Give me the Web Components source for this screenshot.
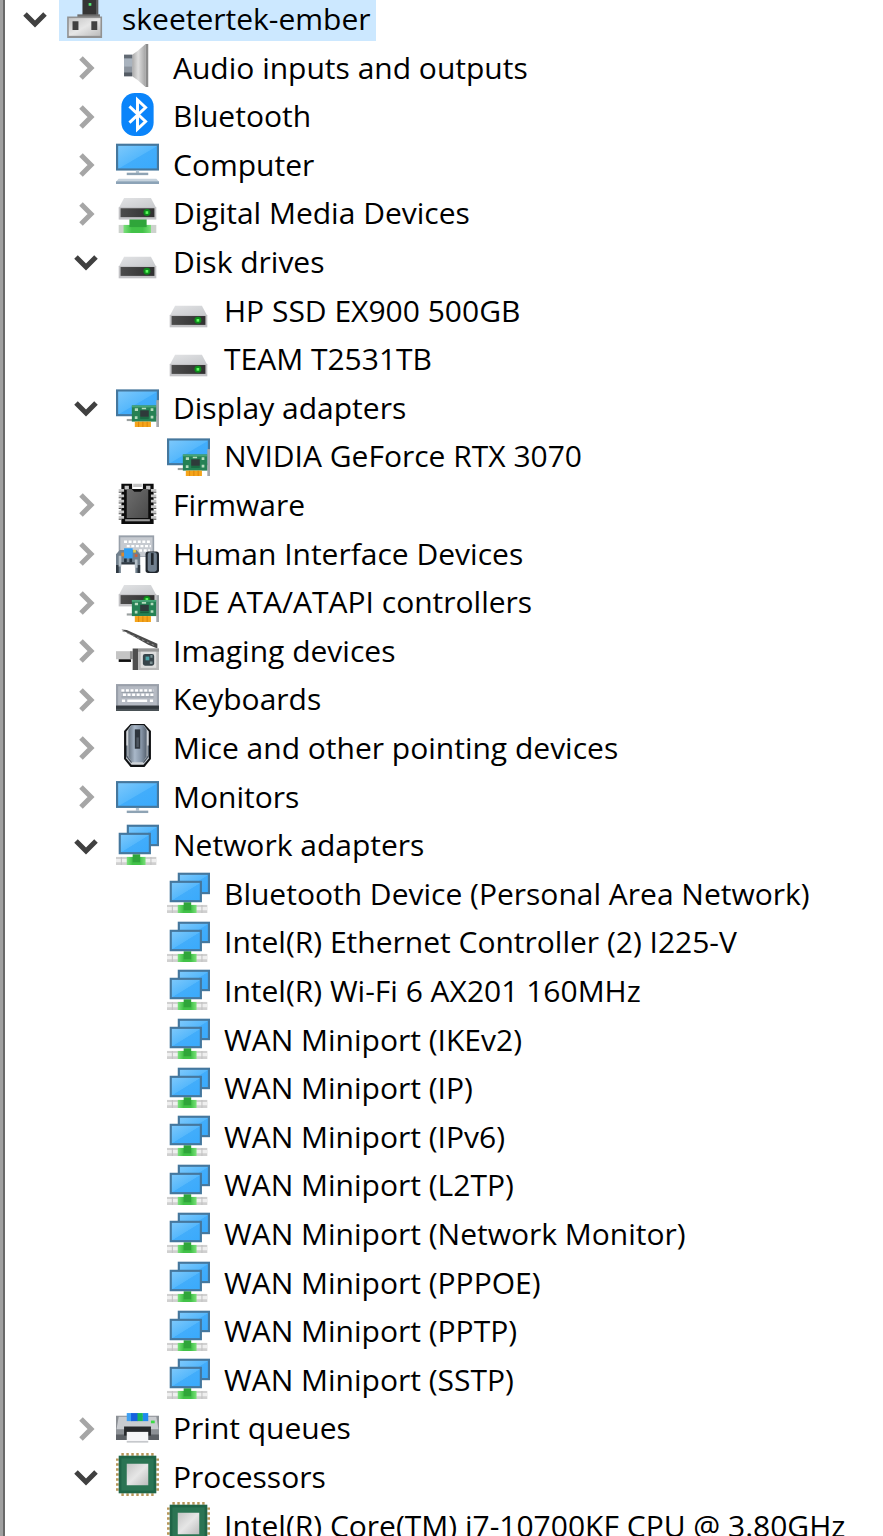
<!DOCTYPE html>
<html lang="en">
<head>
<meta charset="utf-8">
<meta name="viewport" content="width=device-width, initial-scale=1">
<title>Device Manager</title>
<style>
    body {
        margin: 0;
        background: #fff;
        color: #000;
        font-family: "Open Sans", "Noto Sans", sans-serif;
        font-size: 30px;
    }
</style>
</head>
<body>
<device-tree>
    <tree-row level="0" icon="root" state="open" selected>skeetertek-ember</tree-row>
    <tree-row level="1" icon="audio" state="closed">Audio inputs and outputs</tree-row>
    <tree-row level="1" icon="bluetooth" state="closed">Bluetooth</tree-row>
    <tree-row level="1" icon="computer" state="closed">Computer</tree-row>
    <tree-row level="1" icon="media" state="closed">Digital Media Devices</tree-row>
    <tree-row level="1" icon="disk" state="open">Disk drives</tree-row>
    <tree-row level="2" icon="disk">HP SSD EX900 500GB</tree-row>
    <tree-row level="2" icon="disk">TEAM T2531TB</tree-row>
    <tree-row level="1" icon="display" state="open">Display adapters</tree-row>
    <tree-row level="2" icon="display">NVIDIA GeForce RTX 3070</tree-row>
    <tree-row level="1" icon="firmware" state="closed">Firmware</tree-row>
    <tree-row level="1" icon="hid" state="closed">Human Interface Devices</tree-row>
    <tree-row level="1" icon="ide" state="closed">IDE ATA/ATAPI controllers</tree-row>
    <tree-row level="1" icon="imaging" state="closed">Imaging devices</tree-row>
    <tree-row level="1" icon="keyboard" state="closed">Keyboards</tree-row>
    <tree-row level="1" icon="mouse" state="closed">Mice and other pointing devices</tree-row>
    <tree-row level="1" icon="monitor" state="closed">Monitors</tree-row>
    <tree-row level="1" icon="network" state="open">Network adapters</tree-row>
    <tree-row level="2" icon="network">Bluetooth Device (Personal Area Network)</tree-row>
    <tree-row level="2" icon="network">Intel(R) Ethernet Controller (2) I225-V</tree-row>
    <tree-row level="2" icon="network">Intel(R) Wi-Fi 6 AX201 160MHz</tree-row>
    <tree-row level="2" icon="network">WAN Miniport (IKEv2)</tree-row>
    <tree-row level="2" icon="network">WAN Miniport (IP)</tree-row>
    <tree-row level="2" icon="network">WAN Miniport (IPv6)</tree-row>
    <tree-row level="2" icon="network">WAN Miniport (L2TP)</tree-row>
    <tree-row level="2" icon="network">WAN Miniport (Network Monitor)</tree-row>
    <tree-row level="2" icon="network">WAN Miniport (PPPOE)</tree-row>
    <tree-row level="2" icon="network">WAN Miniport (PPTP)</tree-row>
    <tree-row level="2" icon="network">WAN Miniport (SSTP)</tree-row>
    <tree-row level="1" icon="printer" state="closed">Print queues</tree-row>
    <tree-row level="1" icon="cpu" state="open">Processors</tree-row>
    <tree-row level="2" icon="cpu">Intel(R) Core(TM) i7-10700KF CPU @ 3.80GHz</tree-row>
</device-tree>

<script>
// gradients shared by the icons, every shadow root needs its own copy
const DEFS = `
    <defs>
        <linearGradient id="screen" x1="0" y1="0" x2="1" y2="1">
            <stop offset="0" stop-color="#7cc8fb"/><stop offset=".5" stop-color="#56b8fc"/>
            <stop offset=".52" stop-color="#42adfb"/><stop offset="1" stop-color="#3aaafc"/>
        </linearGradient>
        <linearGradient id="lid" x1="0" y1="0" x2="1" y2="1">
            <stop offset="0" stop-color="#e2e3e5"/><stop offset="1" stop-color="#c6c8cb"/>
        </linearGradient>
        <linearGradient id="front" x1="0" y1="0" x2="1" y2="0">
            <stop offset="0" stop-color="#4c4c4c"/><stop offset="1" stop-color="#303030"/>
        </linearGradient>
        <linearGradient id="metal" x1="0" y1="0" x2="1" y2="1">
            <stop offset="0" stop-color="#c4c4c4"/><stop offset=".5" stop-color="#e6e6e6"/>
            <stop offset="1" stop-color="#bcbcbc"/>
        </linearGradient>
        <linearGradient id="cone" x1="0" y1="0" x2="1" y2="0">
            <stop offset="0" stop-color="#a9a9a9"/><stop offset=".45" stop-color="#dedede"/>
            <stop offset="1" stop-color="#a4a4a4"/>
        </linearGradient>
        <linearGradient id="steel" x1="0" y1="0" x2="1" y2="0">
            <stop offset="0" stop-color="#66727f"/><stop offset=".35" stop-color="#a9b8c9"/>
            <stop offset=".7" stop-color="#8796a8"/><stop offset="1" stop-color="#566270"/>
        </linearGradient>
        <linearGradient id="chip" x1="0" y1="0" x2="1" y2="1">
            <stop offset="0" stop-color="#6e6e6e"/><stop offset="1" stop-color="#4a4a4a"/>
        </linearGradient>
        <linearGradient id="green" x1="0" y1="0" x2="1" y2="0">
            <stop offset="0" stop-color="#7be07b"/><stop offset=".3" stop-color="#42c248"/>
            <stop offset=".7" stop-color="#42c248"/><stop offset="1" stop-color="#7be07b"/>
        </linearGradient>
    </defs>`;

const drive = y => `
    <path d="M3 ${y}h10L15 ${y + 3.8}H1z" fill="url(#lid)"/>
    <rect x="1" y="${y + 3.4}" width="14" height="4.6" fill="#c3c3c6"/>
    <rect x="1.7" y="${y + 3.8}" width="12.6" height="3.3" fill="url(#front)"/>
    <circle cx="11.5" cy="${y + 5.4}" r="1.3" fill="#0e8a1c"/>
    <rect x="11" y="${y + 4.9}" width="1" height="1" fill="#5dfc5d"/>`;

const screen = (x, y, w, h) => `
    <rect x="${x}" y="${y}" width="${w}" height="${h}" fill="#45779d"/>
    <rect x="${x + .8}" y="${y + .8}" width="${w - 1.6}" height="${h - 1.6}" fill="url(#screen)"/>`;

const card = y => `
    <rect x="4" y="${y + 5}" width="3" height=".8" fill="#9aa0a0"/>
    <rect x="5.9" y="${y}" width="9.2" height="6" fill="#258154"/>
    <path d="M5.9 ${y}h9.2v.7H5.9z" fill="#48a577"/>
    <path d="M7 ${y + 1}h1.2v1H7zM12.9 ${y + 1}h1v1h-1zM7 ${y + 4}h1v1H7zM12.9 ${y + 3.8}h1v1h-1zM9.6 ${y + .8}h1.6v.6H9.6z" fill="#b5dcbd"/>
    <rect x="9" y="${y + 1.8}" width="3.2" height="2.4" fill="#2e3a3a"/>
    <path d="M9 ${y + 4.4}h3.2v.5H9z" fill="#155f3b"/>
    <rect x="7" y="${y + 6}" width="6" height="${10 - y}" fill="#f5a51b"/>
    <path d="M8.4 ${y + 6}v${10 - y}M10 ${y + 6}v${10 - y}M11.6 ${y + 6}v${10 - y}" stroke="#d87f08" stroke-width=".3"/>
    <rect x="15" y="6" width="1" height="10" fill="#a4a7ab"/>`;

const plug = `
    <rect x="0" y="13" width="15" height="3" fill="#d0d0d0"/>
    <path d="M0 14.4h15" stroke="#efefef" stroke-width="1.2"/>
    <path d="M2 13v3M13 13v3" stroke="#c2c2c2" stroke-width=".4"/>
    <rect x="4" y="13" width="7" height="3" fill="url(#green)"/>
    <rect x="6.2" y="12" width="2.8" height="3" fill="#2fa53a"/>`;

const pins = () => {
    let d = "";
    for (let i = 0; i < 7; i++) {
        const p = 2 + i * 1.85;
        d += `M${p} 0h.9v1h-.9zM${p} 15h.9v1h-.9zM0 ${p}h1v.9H0zM15 ${p}h1v.9h-1z`;
    }
    return d;
};

const ICONS = {
    root: `
        <rect x="6.5" y="0" width="5.3" height="8" fill="#353535"/>
        <rect x="11.6" y="0" width=".8" height="7.4" fill="#595959"/>
        <rect x="8.8" y="3" width="1" height="1" fill="#53ea74"/>
        <rect x="4.6" y="7.2" width="8.4" height="1" fill="#6e6e6e"/>
        <rect x=".8" y="8" width="13" height="8" fill="#919191"/>
        <rect x="1.4" y="8.6" width="11.8" height="6.6" fill="url(#metal)"/>
        <path d="M2.8 9.8h2.2v3.2H2.8zM9.8 9.8H12v3.2H9.8z" fill="#414141"/>`,
    audio: `
        <path d="M6 4L8 2.6 11 0v16L8 13.4 6 12z" fill="url(#cone)"/>
        <rect x="11" y="0" width="1" height="16" fill="#8b8b8b"/>
        <rect x="3" y="4" width="3" height="8" fill="#8b939d"/>
        <path d="M3 4h3v1.4H3z" fill="#626a74"/>
        <path d="M3 5.4h3v3H3z" fill="#a9b3be"/>
        <path d="M3 10.6h3V12H3z" fill="#545b64"/>`,
    bluetooth: `
        <rect x="2" y="0" width="12" height="16" rx="5" fill="#0a84fa"/>
        <path d="M5 5l6 5.6-3 2.8V2.6l3 2.8L5 11" fill="none" stroke="#fff" stroke-width="1.1"/>`,
    computer: `
        ${screen(0, 1, 16, 10)}
        <path d="M7.4 11h1.2v1H7.4z" fill="#b4c4d0"/>
        <rect x="4" y="11.8" width="8" height=".9" fill="#8ea3b4"/>
        <path d="M1 14h14l1 1.2H0z" fill="#c5d2dd"/>
        <rect x="0" y="15" width="16" height="1" fill="#8ca3b7"/>`,
    media: `
        <rect x="1" y="13" width="14" height="3" fill="#cdd2cd"/>
        <rect x="2.8" y="13" width="10.2" height="3" fill="url(#green)"/>
        <rect x="5" y="10.4" width="6.4" height="3.4" fill="#2fa53a"/>
        ${drive(3)}`,
    disk: drive(7),
    display: screen(0, 2, 16, 10) + card(8),
    firmware: `
        <path d="M2 1h4v2h4V1h4v15H2z" fill="#0c0c0c"/>
        <path d="M3.2 1.8h1.6v1.4H3.2zM11.2 1.8h1.6v1.4h-1.6zM6.4 1h3.2v1.2H6.4z" fill="#c3c3c3"/>
        <path d="M4 3h1.8l1 1h2.4l1-1H12v10.8H4z" fill="url(#chip)"/>
        <path d="M3.4 14.2h9.2v.8H3.4z" fill="#989898"/>
        <path d="M1 3h2v1H1zM1 5h2v1H1zM1 7h2v1H1zM1 9h2v1H1zM1 11h2v1H1zM1 13h2v1H1z" fill="#c6c6c6"/>
        <path d="M13 3h2v1h-2zM13 5h2v1h-2zM13 7h2v1h-2zM13 9h2v1h-2zM13 11h2v1h-2zM13 13h2v1h-2z" fill="#c6c6c6"/>
        <path d="M1 4h1v.4H1zM1 6h1v.4H1zM1 8h1v.4H1zM1 10h1v.4H1zM1 12h1v.4H1zM1 14h1v.4H1zM14 4h1v.4h-1zM14 6h1v.4h-1zM14 8h1v.4h-1zM14 10h1v.4h-1zM14 12h1v.4h-1zM14 14h1v.4h-1z" fill="#555"/>`,
    hid: `
        <rect x="1" y="2" width="13.2" height="8" fill="#98a0aa"/>
        <rect x="1.6" y="2.7" width="12" height="7" fill="#c6cad0"/>
        <path d="M3 4.4h10M4 6h9M8.6 7.6h4" stroke="#fff" stroke-width=".9" stroke-dasharray="1.1 .6"/>
        <path d="M0 9L1.4 7.4H7.6L9 9V16H7.2V12.4H1.8V16H0z" fill="#71808d"/>
        <path d="M0 13h1v3H0zM8 13h1v3H8zM1.8 12h5.4v.8H1.8z" fill="#2f3942"/>
        <path d="M1 9.6h1v4H1zM7 11h1v3H7z" fill="#b4bfc8"/>
        <rect x="3" y="6.8" width="3.2" height="3.8" fill="#2f9df0"/>
        <path d="M2 8.4h1v1.4H2z" fill="#d98a2e"/>
        <rect x="6.4" y="7.4" width="1" height="1" fill="#e6cf43"/>
        <rect x="7" y="9" width="1" height="1" fill="#cf5f3a"/>
        <path d="M3 10.6h1V12H3zM5 10.6h1V12H5z" fill="#22313d"/>
        <rect x="11" y="8" width="5" height="8" rx="1" fill="#1f252c"/>
        <rect x="11.8" y="8.3" width="3.4" height="7.2" rx=".9" fill="#71808f"/>
        <rect x="13" y="8.6" width="1" height="4.4" fill="#20262c"/>`,
    ide: drive(2.2) + card(7.8),
    imaging: `
        <path d="M2 .9L4 1.1 15.4 6.2V8L12 6.6z" fill="#4a4a4a"/>
        <path d="M2.4 1.4L15 7.2" stroke="#8e8e8e" stroke-width=".4" stroke-dasharray="1 1"/>
        <rect x="0" y="9" width="5.4" height="3" fill="#c4c4c4"/>
        <rect x="1" y="12" width="4.6" height="1" fill="#111"/>
        <rect x="5.2" y="9" width="1" height="3" fill="#8b8b8b"/>
        <rect x="6.2" y="8" width="2" height="8" fill="#4e4e4e"/>
        <rect x="8.2" y="8" width="7.8" height="8" fill="#b9b9b9"/>
        <path d="M8.2 8h7.8v1.2H8.2z" fill="#979797"/>
        <rect x="9.2" y="9.2" width="5.8" height="6" fill="#dedede"/>
        <rect x="10" y="10" width="4.2" height="4.4" rx=".8" fill="#37444a"/>
        <path d="M11 11h1.4v1.4H11z" fill="#4ba2a8"/>
        <path d="M12.6 12.8h1v1h-1zM12.8 10.4h.8v1h-.8z" fill="#7b8f92"/>`,
    keyboard: `
        <rect x="0" y="3" width="16" height="8.2" fill="#9aa0aa"/>
        <rect x=".8" y="3.8" width="14.4" height="7.2" fill="#b5bac3"/>
        <path d="M2 5.4h12M2.6 7h11.4" stroke="#fff" stroke-width=".9" stroke-dasharray="1.1 .6"/>
        <path d="M2.2 9.2h1.2M4.2 9.2h7.4M12.6 9.2h1.2" stroke="#fff" stroke-width=".9"/>
        <path d="M2 6.1h12M2 7.8h12" stroke="#8f96a1" stroke-width=".3"/>
        <rect x="0" y="11" width="16" height="2" fill="#32383d"/>
        <rect x="0" y="12.2" width="16" height=".8" fill="#4b5257"/>`,
    mouse: `
        <path d="M5.4 0h5.2L13 2.6V13l-2.4 3H5.4L3 13V2.6z" fill="#101214"/>
        <path d="M5.6.6h4.8l1.8 2.2v10l-2 2.4H5.8l-2-2.4v-10z" fill="#cfd4d9"/>
        <path d="M5.8.5h4.4l1.2 1.6v10L10 14.2H6l-1.4-2.1v-10z" fill="url(#steel)"/>
        <path d="M4 8v4l1.8 2.4M12 8v4l-1.8 2.4" fill="none" stroke="#4c5764" stroke-width=".5"/>
        <rect x="7" y="2" width="2" height="7.2" fill="#2e353d"/>
        <rect x="7.6" y="5" width=".9" height="3.6" fill="#4e5761"/>`,
    monitor: `
        ${screen(0, 3, 16, 10)}
        <path d="M7.4 13h1.2v1H7.4z" fill="#b4c4d0"/>
        <rect x="4" y="14" width="8" height=".9" fill="#8ea3b4"/>`,
    network: screen(4, 1, 12, 8) + plug + screen(1, 4, 12, 8),
    printer: `
        <rect x="0" y="4" width="16" height="9" fill="#8d9196"/>
        <path d="M1 4.4h14L15.8 9H.2z" fill="#c9ccd0"/>
        <path d="M0 11h16v2H0z" fill="#5c6065"/>
        <rect x="4" y="3" width="2" height="3" fill="#3fa0f2"/>
        <rect x="5.6" y="3" width="2.6" height="3" fill="#1662de"/>
        <rect x="8" y="3" width="2" height="3" fill="#19b85c"/>
        <rect x="10" y="3" width="2" height="3" fill="#2089f0"/>
        <rect x="13" y="5.8" width="1.4" height="1" fill="#3adb43"/>
        <path d="M3 8h10v3.4H3z" fill="#26282b"/>
        <rect x="4" y="10" width="8" height="4" fill="#f6f6f8"/>
        <path d="M4 13.7h8" stroke="#c6c8cc" stroke-width=".6"/>`,
    cpu: `
        <path d="${pins()}" fill="#b8975a"/>
        <rect x="1" y="1" width="14" height="14" fill="#1f6547"/>
        <rect x="2" y="2" width="12" height="12" fill="#2b7453"/>
        <rect x="4" y="4" width="8" height="8" fill="url(#metal)"/>`
};

class DeviceIcon extends HTMLElement {
    constructor() {
        super();
        this.root = this.attachShadow({ mode: "open" });
    }

    connectedCallback() {
        this.root.innerHTML = `
            <style>
                :host { display: block; flex: none; }
                svg { display: block; width: 43px; height: 43px; }
            </style>
            <svg viewBox="0 0 16 16" aria-hidden="true">${DEFS}${ICONS[this.getAttribute("name")] || ""}</svg>
        `;
    }
}

class TreeRow extends HTMLElement {
    constructor() {
        super();
        this.root = this.attachShadow({ mode: "open" });
    }

    get level() {
        return Number(this.getAttribute("level"));
    }

    connectedCallback() {
        this.setAttribute("role", "treeitem");
        this.setAttribute("aria-level", this.level + 1);
        this.root.innerHTML = `
            <style>
                :host {
                    display: flex;
                    align-items: stretch;
                    box-sizing: border-box;
                    height: 49px;
                    padding-left: 6px;
                    white-space: nowrap;
                }
                :host([level="1"]) { padding-left: 57px; }
                :host([level="2"]) { padding-left: 108px; }
                :host([hidden]) { display: none; }

                .toggle {
                    flex: none;
                    display: flex;
                    align-items: center;
                    justify-content: center;
                    width: 48px;
                    margin: 0;
                    padding: 5px 0 0;
                    border: none;
                    background: none;
                    color: #a6a6a6;
                    cursor: pointer;
                }
                .toggle svg { display: block; width: 24px; height: 24px; }
                .toggle path { fill: none; stroke: currentColor; stroke-width: 5; }
                :host([state="open"]) .toggle { color: #404040; }
                :host([state="open"]) .toggle svg { transform: rotate(90deg); }
                :host(:not([state])) .toggle { visibility: hidden; }

                .node {
                    display: flex;
                    align-items: center;
                    gap: 14px;
                    padding: 0 5px 0 6px;
                }
                :host([selected]) .node { background: #cce8ff; }
                .label { padding-top: 4px; line-height: 36px; }
            </style>
            <button class="toggle" type="button" aria-label="Toggle">
                <svg viewBox="0 0 24 24"><path d="M7 2L17 12 7 22"/></svg>
            </button>
            <div class="node">
                <device-icon name="${this.getAttribute("icon")}"></device-icon>
                <span class="label"><slot></slot></span>
            </div>
        `;
        this.root.querySelector(".toggle").addEventListener("click", e => this.onToggle(e), false);
    }

    onToggle() {
        this.setAttribute("state", this.getAttribute("state") == "open" ? "closed" : "open");
        this.dispatchEvent(new CustomEvent("row-toggle", { bubbles: true }));
    }
}

class DeviceTree extends HTMLElement {
    constructor() {
        super();
        this.root = this.attachShadow({ mode: "open" });
        this.root.innerHTML = `
            <style>
                :host {
                    display: block;
                    box-sizing: border-box;
                    height: 100vh;
                    overflow: hidden;
                    background: linear-gradient(to right, #a0a0a0 3px, #696969 3px, #696969 5px, #fff 5px);
                }
                /* list is scrolled a little, the first row is cut at the top */
                .rows {
                    margin-top: -8px;
                    padding-left: 5px;
                }
                ::slotted(tree-row:nth-child(5n)),
                ::slotted(tree-row:nth-child(5n + 3)) { height: 48px; }
            </style>
            <div class="rows" role="tree"><slot></slot></div>
        `;
        this.addEventListener("row-toggle", e => this.update(), false);
    }

    // hides everything that lies below a closed row
    update() {
        let closedAt = Infinity;
        for (const row of this.querySelectorAll("tree-row")) {
            row.hidden = row.level > closedAt;
            if (!row.hidden) {
                closedAt = row.getAttribute("state") == "closed" ? row.level : Infinity;
            }
        }
    }
}

customElements.define("device-icon", DeviceIcon);
customElements.define("tree-row", TreeRow);
customElements.define("device-tree", DeviceTree);
</script>
</body>
</html>
